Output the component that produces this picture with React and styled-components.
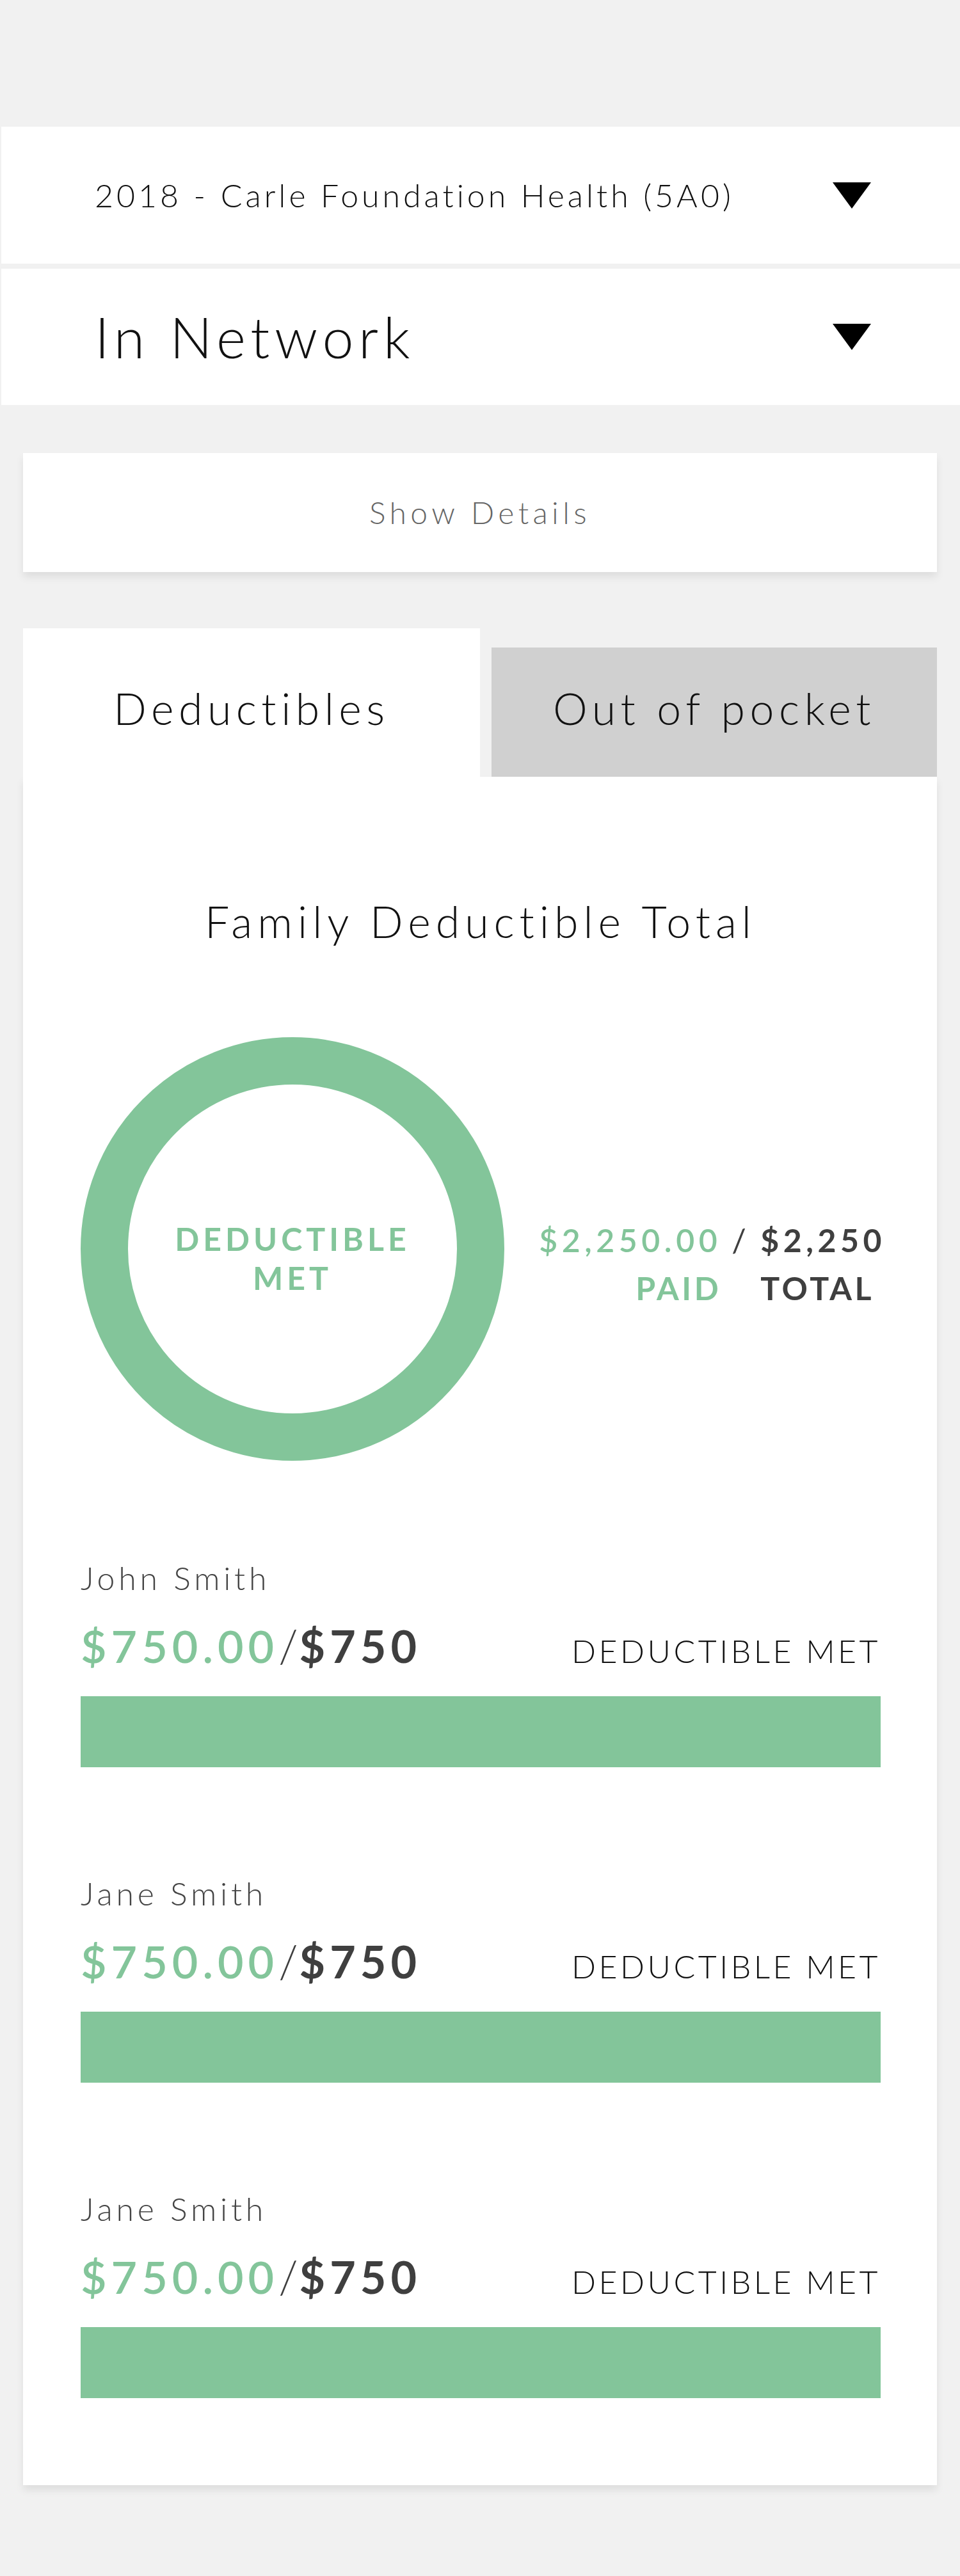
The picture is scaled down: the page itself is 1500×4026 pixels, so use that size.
import React from "react";
import styled, { createGlobalStyle } from "styled-components";

const GREEN = "#83c59a";
const DARK = "#3f3f3f";

const GlobalStyle = createGlobalStyle`
  html, body {
    margin: 0;
    padding: 0;
    background: #f1f1f1;
  }
  body {
    font-family: Lato, "Open Sans", "Liberation Sans", sans-serif;
    line-height: 1.2;
    color: #111;
  }
  * {
    box-sizing: border-box;
  }
`;

const Page = styled.div`
  width: 1500px;
  min-height: 4026px;
  padding-top: 198px;
  background: #f1f1f1;
`;

const Select = styled.div`
  display: flex;
  align-items: center;
  justify-content: space-between;
  height: ${(p) => p.$height}px;
  margin-left: 2px;
  margin-top: ${(p) => p.$gap || 0}px;
  padding: 0 139px 0 146px;
  background: #fff;
  font-size: ${(p) => p.$size}px;
  font-weight: 300;
  letter-spacing: ${(p) => p.$spacing}px;
  color: #111;
`;

const Caret = styled.span`
  width: 0;
  height: 0;
  border-left: 30px solid transparent;
  border-right: 30px solid transparent;
  border-top: 41px solid #000;
`;

const DetailsButton = styled.div`
  display: flex;
  align-items: center;
  justify-content: center;
  height: 186px;
  margin: 75px 36px 0;
  background: #fff;
  box-shadow: 0 8px 12px rgba(0, 0, 0, 0.08);
  font-size: 48px;
  font-weight: 300;
  letter-spacing: 6.4px;
  color: #666;
`;

const Tabs = styled.div`
  display: flex;
  align-items: flex-end;
  gap: 18px;
  margin: 88px 36px 0;
`;

const Tab = styled.div`
  display: flex;
  align-items: flex-end;
  justify-content: center;
  width: ${(p) => (p.$active ? 714 : 696)}px;
  height: ${(p) => (p.$active ? 232 : 202)}px;
  padding-bottom: 66px;
  background: ${(p) => (p.$active ? "#fff" : "#d0d0d0")};
  font-size: 68px;
  font-weight: 300;
  letter-spacing: 7.5px;
  color: #111;
`;

const Panel = styled.div`
  margin: 0 36px;
  padding: 185px 88px 136px 90px;
  background: #fff;
  box-shadow: 0 8px 12px rgba(0, 0, 0, 0.08);
`;

const Title = styled.h2`
  margin: 0;
  text-align: center;
  font-size: 68px;
  font-weight: 300;
  letter-spacing: 8px;
  color: #111;
`;

const Summary = styled.div`
  display: flex;
  justify-content: space-between;
  align-items: flex-start;
  margin-top: 140px;
`;

const Donut = styled.div`
  display: flex;
  flex-direction: column;
  align-items: center;
  justify-content: center;
  width: 662px;
  height: 662px;
  padding-top: 30px;
  border: 74px solid ${GREEN};
  border-radius: 50%;
  color: ${GREEN};
  font-size: 50px;
  font-weight: 700;
  letter-spacing: 6px;
  line-height: 61px;
  text-align: center;
`;

const Totals = styled.div`
  display: grid;
  grid-template-columns: auto auto auto;
  column-gap: 16px;
  margin-top: 280px;
  margin-right: -8px;
  font-size: 50px;
  line-height: 75px;
`;

const Cell = styled.span`
  color: ${(p) => p.$color || DARK};
  text-align: ${(p) => p.$align || "left"};
  font-weight: ${(p) => p.$weight || 700};
  letter-spacing: ${(p) => (p.$label ? 4.5 : 6.5)}px;
`;

const Members = styled.div`
  display: flex;
  flex-direction: column;
  gap: 167px;
  margin-top: 153px;
`;

const Member = styled.div`
  display: flex;
  flex-direction: column;
`;

const Name = styled.div`
  font-size: 50px;
  font-weight: 300;
  letter-spacing: 5.8px;
  color: #444;
`;

const AmountRow = styled.div`
  display: flex;
  align-items: baseline;
  justify-content: space-between;
  margin-top: 34px;
`;

const Amount = styled.div`
  font-size: 70px;
  letter-spacing: 7px;
`;

const Paid = styled.span`
  color: ${GREEN};
  font-weight: 600;
`;

const Slash = styled.span`
  color: ${DARK};
  font-weight: 300;
  letter-spacing: 2px;
`;

const Total = styled.span`
  color: ${DARK};
  font-weight: 700;
`;

const Status = styled.div`
  font-size: 50px;
  font-weight: 300;
  letter-spacing: 4.5px;
  color: #111;
`;

const Bar = styled.div`
  height: 111px;
  margin-top: 37px;
  background: ${GREEN};
`;

const members = [
  { name: "John Smith", paid: "$750.00", total: "$750" },
  { name: "Jane Smith", paid: "$750.00", total: "$750" },
  { name: "Jane Smith", paid: "$750.00", total: "$750" },
];

const App = () => {
  return (
    <Page>
      <GlobalStyle />
      <Select $height={214} $size={50} $spacing={5}>
        <span>2018 - Carle Foundation Health (5A0)</span>
        <Caret />
      </Select>
      <Select $height={213} $gap={8} $size={88} $spacing={7.6}>
        <span>In Network</span>
        <Caret />
      </Select>

      <DetailsButton>Show Details</DetailsButton>

      <Tabs>
        <Tab $active>Deductibles</Tab>
        <Tab>Out of pocket</Tab>
      </Tabs>

      <Panel>
        <Title>Family Deductible Total</Title>

        <Summary>
          <Donut>
            <div>DEDUCTIBLE</div>
            <div>MET</div>
          </Donut>
          <Totals>
            <Cell $color={GREEN} $align="right" $weight={600}>
              $2,250.00
            </Cell>
            <Cell $weight={400}>/</Cell>
            <Cell>$2,250</Cell>
            <Cell $color={GREEN} $align="right" $label>
              PAID
            </Cell>
            <span />
            <Cell $label>TOTAL</Cell>
          </Totals>
        </Summary>

        <Members>
          {members.map((m, i) => (
            <Member key={i}>
              <Name>{m.name}</Name>
              <AmountRow>
                <Amount>
                  <Paid>{m.paid}</Paid>
                  <Slash>/</Slash>
                  <Total>{m.total}</Total>
                </Amount>
                <Status>DEDUCTIBLE MET</Status>
              </AmountRow>
              <Bar />
            </Member>
          ))}
        </Members>
      </Panel>
    </Page>
  );
};

export default App;
